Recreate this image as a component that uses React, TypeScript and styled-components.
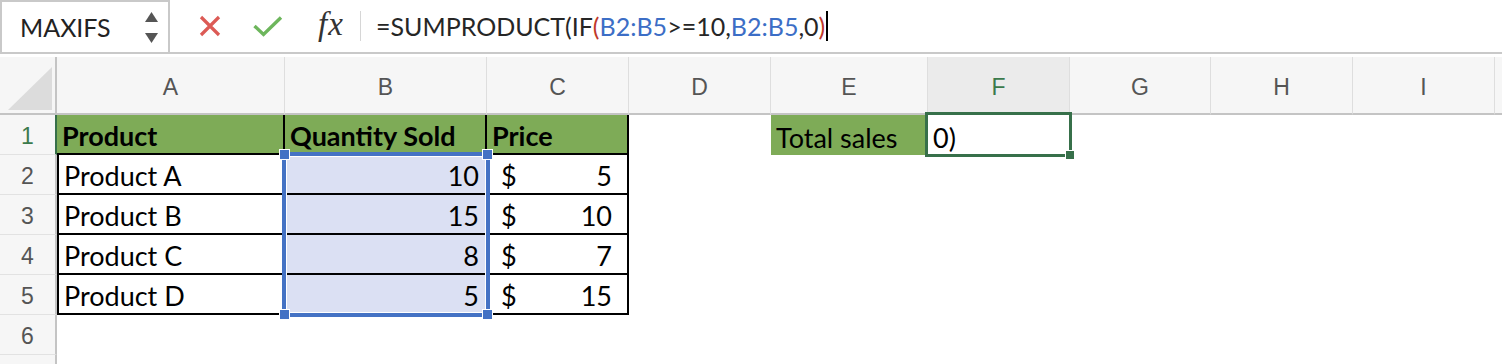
import React from "react";
import styled, { createGlobalStyle, css } from "styled-components";

// widths of row header + columns A..J (J runs off the right edge)
const COLS = [57, 228, 202, 142, 142, 157, 142, 141, 142, 142, 142];
const LETTERS = ["A", "B", "C", "D", "E", "F", "G", "H", "I", ""];
const HEADER_H = 58;
const ROW_H = 40;

const GREEN_FILL = "#7eab57";
const SEL_FILL = "#dbe0f3";
const SEL_BLUE = "#4472c4";
const ACTIVE = "#37704a";

const colLeft = (i: number) => COLS.slice(0, i).reduce((a, b) => a + b, 0);

const rows = [
  { product: "Product A", qty: 10, price: 5 },
  { product: "Product B", qty: 15, price: 10 },
  { product: "Product C", qty: 8, price: 7 },
  { product: "Product D", qty: 5, price: 15 },
];

export default function App() {
  return (
    <>
      <GlobalStyle />
      <FormulaBar>
        <NameBox>
          <span>MAXIFS</span>
          <Spinner>
            <svg width="13" height="10" viewBox="0 0 13 10">
              <path d="M6.5 0 L13 10 L0 10 Z" fill="#555" />
            </svg>
            <svg width="13" height="10" viewBox="0 0 13 10">
              <path d="M0 0 L13 0 L6.5 10 Z" fill="#555" />
            </svg>
          </Spinner>
        </NameBox>
        <Icons>
          <IconButton $w={40}>
            <svg width="22" height="22" viewBox="0 0 22 22">
              <path d="M2 2 L20 20 M20 2 L2 20" stroke="#dc5a55" strokeWidth="3.2" />
            </svg>
          </IconButton>
          <IconButton $w={40}>
            <svg width="30" height="22" viewBox="0 0 30 22">
              <path d="M1.5 11 L10.5 19.5 L28 2.5" stroke="#6db65c" strokeWidth="3.4" fill="none" />
            </svg>
          </IconButton>
          <IconButton $w={50}>
            <Fx>fx</Fx>
          </IconButton>
        </Icons>
        <Divider />
        <Formula>
          =SUMPRODUCT(IF<Paren>(</Paren>
          <Ref>B2:B5</Ref>&gt;=10,<Ref>B2:B5</Ref>,0<Paren>)</Paren>
          <Caret />
        </Formula>
      </FormulaBar>

      <Sheet>
        <Corner>
          <Triangle />
        </Corner>
        {LETTERS.map((l, i) => (
          <ColHeader key={i} $active={l === "F"}>
            {l}
          </ColHeader>
        ))}

        <RowHeader $active>1</RowHeader>
        <Cell $fill={GREEN_FILL} $bold $table>Product</Cell>
        <Cell $fill={GREEN_FILL} $bold $table>Quantity Sold</Cell>
        <Cell $fill={GREEN_FILL} $bold $table>Price</Cell>
        <Cell />
        <Cell $fill={GREEN_FILL}>Total sales</Cell>
        <Cell>0)</Cell>
        {Array.from({ length: 4 }).map((_, k) => (
          <Cell key={k} />
        ))}

        {rows.map((r, i) => (
          <React.Fragment key={r.product}>
            <RowHeader>{i + 2}</RowHeader>
            <Cell $table $leftEdge>{r.product}</Cell>
            <Cell $table $fill={SEL_FILL} $align="right">{r.qty}</Cell>
            <PriceCell $table $align="split">
              <span>$</span>
              <span>{r.price}</span>
            </PriceCell>
            {Array.from({ length: 7 }).map((_, k) => (
              <Cell key={k} />
            ))}
          </React.Fragment>
        ))}

        {["6", ""].map((n, r) => (
          <React.Fragment key={r}>
            <RowHeader>{n}</RowHeader>
            {Array.from({ length: 10 }).map((_, k) => (
              <Cell key={k} />
            ))}
          </React.Fragment>
        ))}

        <Selection
          style={{
            left: colLeft(2) - 3,
            top: HEADER_H + ROW_H - 3,
            width: COLS[2] + 6,
            height: ROW_H * 4 + 5,
          }}
        >
          <Handle $pos="tl" />
          <Handle $pos="tr" />
          <Handle $pos="bl" />
          <Handle $pos="br" />
        </Selection>

        <ActiveCell
          style={{
            left: colLeft(6) - 3,
            top: HEADER_H - 3,
            width: COLS[6] + 5,
            height: ROW_H + 5,
          }}
        >
          <FillHandle />
        </ActiveCell>
      </Sheet>
    </>
  );
}

const GlobalStyle = createGlobalStyle`
  html, body {
    margin: 0;
    padding: 0;
    background: #fff;
  }
  body {
    width: 1502px;
    height: 364px;
    overflow: hidden;
    font-family: Lato, "Liberation Sans", sans-serif;
  }
`;

const FormulaBar = styled.div`
  display: flex;
  align-items: stretch;
  height: 54px;
  box-sizing: border-box;
  border-bottom: 2px solid #c9c9c9;
`;

const NameBox = styled.div`
  width: 170px;
  box-sizing: border-box;
  border: 2px solid #c9c9c9;
  border-bottom: none;
  display: flex;
  align-items: center;
  justify-content: space-between;
  padding: 0 10px 0 18px;
  font-size: 25px;
  color: #222;
`;

const Spinner = styled.div`
  display: flex;
  flex-direction: column;
  gap: 11px;
`;

const Icons = styled.div`
  display: flex;
  align-items: center;
  gap: 18px;
  padding-left: 20px;
`;

const IconButton = styled.div<{ $w: number }>`
  width: ${(p) => p.$w}px;
  display: flex;
  align-items: center;
  justify-content: center;
`;

const Fx = styled.span`
  font-family: "Liberation Serif", serif;
  font-style: italic;
  font-size: 33px;
  color: #333;
  letter-spacing: 1px;
  margin-top: -4px;
`;

const Divider = styled.div`
  width: 1px;
  height: 30px;
  align-self: center;
  background: #d6d6d6;
  margin-left: 4px;
`;

const Formula = styled.div`
  display: flex;
  align-items: center;
  padding-left: 15px;
  font-size: 25px;
  color: #262626;
  white-space: pre;
`;

const Paren = styled.span`
  color: #c0392b;
`;

const Ref = styled.span`
  color: #3c6ec6;
`;

const Caret = styled.span`
  display: inline-block;
  width: 2px;
  height: 30px;
  background: #000;
  margin-left: 1px;
`;

const Sheet = styled.div`
  position: relative;
  margin-top: 3px;
  display: grid;
  grid-template-columns: ${COLS.map((c) => c + "px").join(" ")};
  grid-template-rows: ${HEADER_H}px repeat(7, ${ROW_H}px);
  height: 307px;
  overflow: hidden;
`;

const Corner = styled.div`
  background: #f6f6f6;
  border-right: 2px solid #c4c4c4;
  border-bottom: 2px solid #c4c4c4;
  display: flex;
  align-items: flex-end;
  justify-content: flex-end;
  padding: 0 3px 3px 0;
`;

const Triangle = styled.div`
  width: 44px;
  height: 43px;
  background: #dcdcdc;
  clip-path: polygon(100% 0, 100% 100%, 0 100%);
`;

const ColHeader = styled.div<{ $active?: boolean }>`
  background: ${(p) => (p.$active ? "#ebebeb" : "#f6f6f6")};
  border-bottom: 2px solid #c4c4c4;
  border-right: 1px solid #dedede;
  display: flex;
  align-items: center;
  justify-content: center;
  padding-top: 5px;
  font-family: "Liberation Sans", Arial, sans-serif;
  font-size: 23px;
  color: ${(p) => (p.$active ? "#3b7a4c" : "#555")};
`;

const RowHeader = styled.div<{ $active?: boolean }>`
  background: #f6f6f6;
  border-right: 2px solid ${(p) => (p.$active ? ACTIVE : "#c4c4c4")};
  border-bottom: 1px solid #e2e2e2;
  display: flex;
  align-items: center;
  justify-content: center;
  padding-top: 4px;
  font-family: "Liberation Sans", Arial, sans-serif;
  font-size: 23px;
  color: ${(p) => (p.$active ? "#3b7a4c" : "#555")};
`;

const Cell = styled.div<{
  $fill?: string;
  $bold?: boolean;
  $align?: "left" | "right" | "split";
  $table?: boolean;
  $leftEdge?: boolean;
}>`
  box-sizing: border-box;
  display: flex;
  align-items: flex-end;
  justify-content: ${(p) =>
    p.$align === "right" ? "flex-end" : p.$align === "split" ? "space-between" : "flex-start"};
  padding: 0 6px 1px 5px;
  background: ${(p) => p.$fill ?? "#fff"};
  font-size: 27px;
  font-weight: ${(p) => (p.$bold ? 700 : 400)};
  color: #000;
  white-space: nowrap;
  overflow: hidden;
  ${(p) =>
    p.$table &&
    css`
      border-right: 2px solid #000;
      border-bottom: 2px solid #000;
    `}
  ${(p) =>
    p.$leftEdge &&
    css`
      border-left: 2px solid #000;
    `}
`;

const PriceCell = styled(Cell)`
  padding: 0 15px 1px 14px;
`;

const Selection = styled.div`
  position: absolute;
  box-sizing: border-box;
  border: 4px solid ${SEL_BLUE};
  box-shadow: inset 0 0 0 1px #fff;
  pointer-events: none;
`;

const Handle = styled.div<{ $pos: "tl" | "tr" | "bl" | "br" }>`
  position: absolute;
  width: 9px;
  height: 9px;
  background: ${SEL_BLUE};
  border: 1px solid #fff;
  ${(p) => (p.$pos[0] === "t" ? "top: -7px;" : "bottom: -7px;")}
  ${(p) => (p.$pos[1] === "l" ? "left: -7px;" : "right: -7px;")}
`;

const ActiveCell = styled.div`
  position: absolute;
  box-sizing: border-box;
  border: 3px solid ${ACTIVE};
  pointer-events: none;
`;

const FillHandle = styled.div`
  position: absolute;
  right: -6px;
  bottom: -6px;
  width: 8px;
  height: 8px;
  background: ${ACTIVE};
  border: 1px solid #fff;
`;
